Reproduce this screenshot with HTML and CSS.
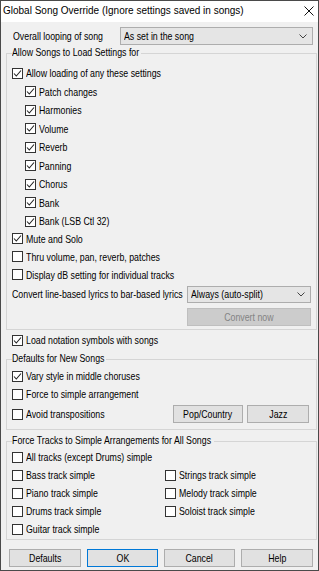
FILE: index.html
```html
<!DOCTYPE html>
<html>
<head>
<meta charset="utf-8">
<link rel="stylesheet" href="styles.css">
</head>
<body>
<div class="dialog">
  <div class="titlebar">
    <span class="title">Global Song Override (Ignore settings saved in songs)</span>
    <svg class="close" width="10" height="10" viewBox="0 0 10 10"><path d="M0.5 0.5 L9.5 9.5 M9.5 0.5 L0.5 9.5" stroke="#111" stroke-width="1" fill="none"/></svg>
  </div>
  <div class="content">
    <div class="looping">
      <span class="lbl"><span class="t">Overall looping of song</span></span>
      <div class="combo combo-wide"><span class="t">As set in the song</span><svg class="chev" width="8" height="5" viewBox="0 0 8 5"><polyline points="0.5,0.5 4,4 7.5,0.5" stroke="#444" stroke-width="1" fill="none"/></svg></div>
    </div>

    <fieldset class="group g1">
      <legend class="lg1"><span class="t">Allow Songs to Load Settings for</span></legend>
      <div class="cb r185"><span class="box"><svg width="9" height="9" viewBox="0 0 9 9"><polyline points="1,4.5 3.3,7 8,1.5" stroke="#222" stroke-width="1.1" fill="none"/></svg></span><span class="t">Allow loading of any these settings</span></div>
      <div class="sub">
        <div class="cb r185"><span class="box"><svg width="9" height="9" viewBox="0 0 9 9"><polyline points="1,4.5 3.3,7 8,1.5" stroke="#222" stroke-width="1.1" fill="none"/></svg></span><span class="t">Patch changes</span></div>
        <div class="cb r185"><span class="box"><svg width="9" height="9" viewBox="0 0 9 9"><polyline points="1,4.5 3.3,7 8,1.5" stroke="#222" stroke-width="1.1" fill="none"/></svg></span><span class="t">Harmonies</span></div>
        <div class="cb r185"><span class="box"><svg width="9" height="9" viewBox="0 0 9 9"><polyline points="1,4.5 3.3,7 8,1.5" stroke="#222" stroke-width="1.1" fill="none"/></svg></span><span class="t">Volume</span></div>
        <div class="cb r185"><span class="box"><svg width="9" height="9" viewBox="0 0 9 9"><polyline points="1,4.5 3.3,7 8,1.5" stroke="#222" stroke-width="1.1" fill="none"/></svg></span><span class="t">Reverb</span></div>
        <div class="cb r185"><span class="box"><svg width="9" height="9" viewBox="0 0 9 9"><polyline points="1,4.5 3.3,7 8,1.5" stroke="#222" stroke-width="1.1" fill="none"/></svg></span><span class="t">Panning</span></div>
        <div class="cb r185"><span class="box"><svg width="9" height="9" viewBox="0 0 9 9"><polyline points="1,4.5 3.3,7 8,1.5" stroke="#222" stroke-width="1.1" fill="none"/></svg></span><span class="t">Chorus</span></div>
        <div class="cb r185"><span class="box"><svg width="9" height="9" viewBox="0 0 9 9"><polyline points="1,4.5 3.3,7 8,1.5" stroke="#222" stroke-width="1.1" fill="none"/></svg></span><span class="t">Bank</span></div>
        <div class="cb r185"><span class="box"><svg width="9" height="9" viewBox="0 0 9 9"><polyline points="1,4.5 3.3,7 8,1.5" stroke="#222" stroke-width="1.1" fill="none"/></svg></span><span class="t">Bank (LSB Ctl 32)</span></div>
      </div>
      <div class="cb r18"><span class="box"><svg width="9" height="9" viewBox="0 0 9 9"><polyline points="1,4.5 3.3,7 8,1.5" stroke="#222" stroke-width="1.1" fill="none"/></svg></span><span class="t">Mute and Solo</span></div>
      <div class="cb r18"><span class="box"></span><span class="t">Thru volume, pan, reverb, patches</span></div>
      <div class="cb r18"><span class="box"></span><span class="t">Display dB setting for individual tracks</span></div>
      <div class="convert">
        <span class="lbl"><span class="t">Convert line-based lyrics to bar-based lyrics</span></span>
        <div class="combo combo-small"><span class="t">Always (auto-split)</span><svg class="chev" width="8" height="5" viewBox="0 0 8 5"><polyline points="0.5,0.5 4,4 7.5,0.5" stroke="#444" stroke-width="1" fill="none"/></svg></div>
      </div>
      <div class="btn btn-disabled convert-now"><span class="t">Convert now</span></div>
    </fieldset>

    <div class="cb r18 outer"><span class="box"><svg width="9" height="9" viewBox="0 0 9 9"><polyline points="1,4.5 3.3,7 8,1.5" stroke="#222" stroke-width="1.1" fill="none"/></svg></span><span class="t">Load notation symbols with songs</span></div>

    <fieldset class="group g2">
      <legend class="lg2"><span class="t">Defaults for New Songs</span></legend>
      <div class="cb r18"><span class="box"><svg width="9" height="9" viewBox="0 0 9 9"><polyline points="1,4.5 3.3,7 8,1.5" stroke="#222" stroke-width="1.1" fill="none"/></svg></span><span class="t">Vary style in middle choruses</span></div>
      <div class="cb r18"><span class="box"></span><span class="t">Force to simple arrangement</span></div>
      <div class="avoid">
        <div class="cb"><span class="box"></span><span class="t">Avoid transpositions</span></div>
        <div class="btn pop"><span class="t">Pop/Country</span></div>
        <div class="btn jazz"><span class="t">Jazz</span></div>
      </div>
    </fieldset>

    <fieldset class="group g3">
      <legend class="lg3"><span class="t">Force Tracks to Simple Arrangements for All Songs</span></legend>
      <div class="tracks">
        <div class="cb r18 full"><span class="box"></span><span class="t">All tracks (except Drums) simple</span></div>
        <div class="cb r18"><span class="box"></span><span class="t">Bass track simple</span></div>
        <div class="cb r18"><span class="box"></span><span class="t">Strings track simple</span></div>
        <div class="cb r18"><span class="box"></span><span class="t">Piano track simple</span></div>
        <div class="cb r18"><span class="box"></span><span class="t">Melody track simple</span></div>
        <div class="cb r18"><span class="box"></span><span class="t">Drums track simple</span></div>
        <div class="cb r18"><span class="box"></span><span class="t">Soloist track simple</span></div>
        <div class="cb r18"><span class="box"></span><span class="t">Guitar track simple</span></div>
      </div>
    </fieldset>

    <div class="buttons">
      <div class="btn b72"><span class="t">Defaults</span></div>
      <div class="btn b71 ok"><span class="t">OK</span></div>
      <div class="btn b71"><span class="t">Cancel</span></div>
      <div class="btn b72"><span class="t">Help</span></div>
    </div>
  </div>
</div>
</body>
</html>
```

FILE: styles.css
```css
* { box-sizing: border-box; }
html, body { margin: 0; padding: 0; background: #fff; }
body {
  font-family: "Liberation Sans", Arial, sans-serif;
  font-size: 11px;
  color: #000;
}
.t {
  display: inline-block;
  white-space: nowrap;
  transform: scaleX(0.8);
  transform-origin: 0 50%;
}
.dialog {
  width: 319px;
  height: 571px;
  border: 1px solid #4a4a4a;
  background: #f0f0f0;
  display: flex;
  flex-direction: column;
}
.titlebar {
  height: 21px;
  flex: none;
  background: #fff;
  display: flex;
  align-items: center;
  justify-content: space-between;
  padding: 0 4px 2px 2px;
}
.title {
  font-size: 10px;
  color: #000;
  white-space: nowrap;
}
.close { display: block; }
.content {
  flex: 1;
  display: flex;
  flex-direction: column;
}
.lbl {
  flex: 0 1 auto;
  min-width: 0;
  white-space: nowrap;
}
.looping {
  display: flex;
  align-items: center;
  height: 18px;
  margin: 5px 5px 0 12px;
}
.combo {
  margin-left: auto;
  flex: none;
  background: #e5e5e5;
  border: 1px solid #adadad;
  display: flex;
  align-items: center;
  justify-content: space-between;
  padding: 0 5px 0 3px;
  overflow: hidden;
}
.combo .t { flex: none; }
.combo-wide { width: 193px; height: 18px; }
.combo-small { width: 124px; height: 17px; }
.chev { display: block; flex: none; }

.group {
  margin: 0 1px 0 5px;
  padding: 0 5px;
  border: 1px solid #d5d5d5;
  min-width: 0;
}
.group legend {
  line-height: 12px;
  padding: 0 0 2px 0;
  white-space: nowrap;
  overflow: visible;
}
.lg1 { width: 129px; }
.lg2 { width: 94px; }
.lg3 { width: 202px; }
.g1 { margin-top: 1px; padding-top: 4px; padding-bottom: 3px; }
.g2 { margin-top: 3px; padding-top: 1px; padding-bottom: 5px; }
.g3 { margin-top: 4px; padding-top: 0; padding-bottom: 1px; }

.cb {
  display: flex;
  align-items: center;
  white-space: nowrap;
}
.r185 { height: 18.5px; }
.r18 { height: 18px; }
.box {
  width: 11px;
  height: 11px;
  flex: none;
  border: 1px solid #333;
  background: #fff;
  margin-right: 3px;
  display: flex;
  align-items: center;
  justify-content: center;
}
.box svg { display: block; }
.sub { padding-left: 13px; margin-bottom: -1px; }

.convert {
  display: flex;
  align-items: center;
  height: 17px;
  margin-top: 2px;
}
.btn {
  height: 18px;
  flex: none;
  background: #e1e1e1;
  border: 1px solid #adadad;
  display: flex;
  align-items: center;
  justify-content: center;
}
.btn .t { transform-origin: 50% 50%; }
.btn-disabled {
  background: #cccccc;
  border-color: #bfbfbf;
  color: #838383;
}
.convert-now {
  width: 124px;
  margin-top: 5.5px;
  margin-left: auto;
}
.outer { margin: 1px 0 0 11px; }

.avoid {
  display: flex;
  align-items: center;
  height: 20px;
  margin-top: 1px;
}
.pop { width: 70px; margin-left: auto; }
.jazz { width: 62px; margin-left: 4px; margin-right: 2px; }

.tracks {
  display: grid;
  grid-template-columns: 153px 1fr;
}
.tracks .full { grid-column: 1 / 3; }

.buttons {
  display: flex;
  margin: 9px 0 0 8px;
  gap: 6px;
}
.b72 { width: 72px; }
.b71 { width: 71px; }
.ok { border-color: #0078d7; }
```
